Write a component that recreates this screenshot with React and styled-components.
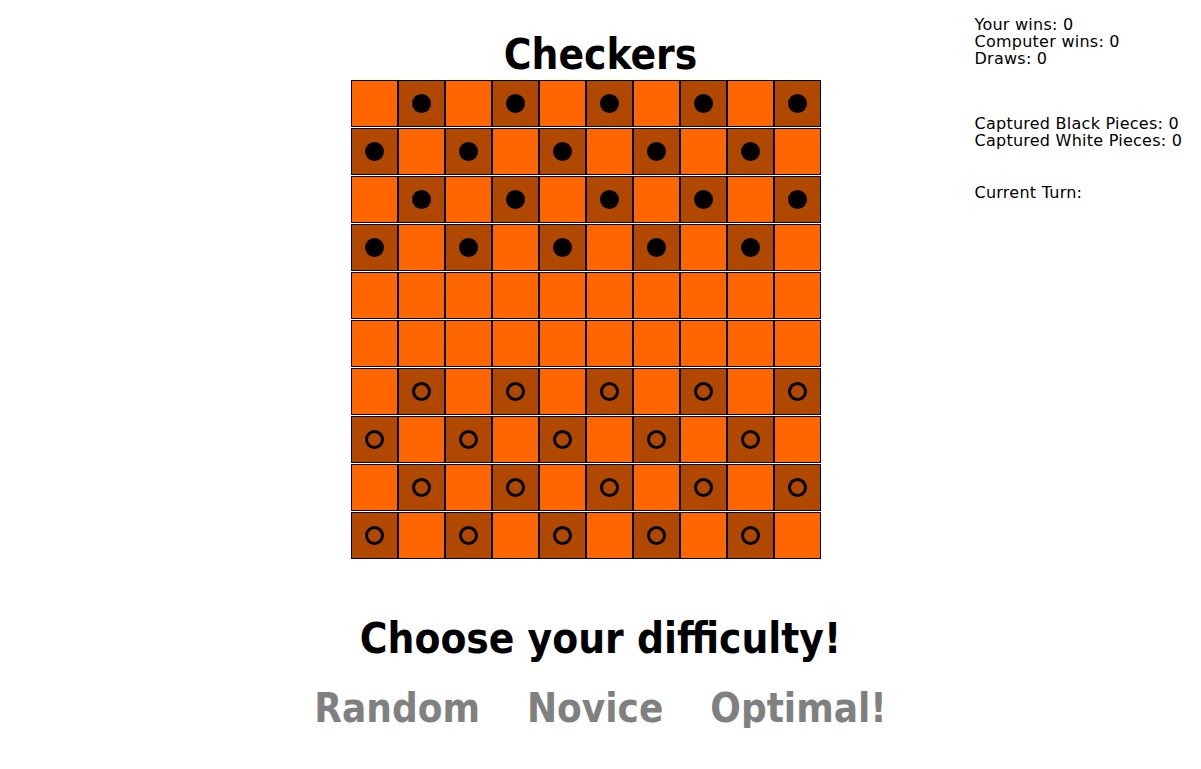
import React, { useState } from 'react';
import styled, { createGlobalStyle } from 'styled-components';

const GlobalStyle = createGlobalStyle`
    body {
        margin: 0;
        background: #ffffff;
        font-family: "DejaVu Sans Condensed", "DejaVu Sans", sans-serif;
        color: #000;
    }
`;

const Page = styled.div`
    display: grid;
    grid-template-columns: 1fr 500px 1fr;
    width: 100%;
`;

const Main = styled.main`
    grid-column: 2;
    grid-row: 1;
    display: flex;
    flex-direction: column;
`;

const Title = styled.h1`
    margin: 34px 0 4px;
    font-size: 42px;
    line-height: 42px;
    font-weight: bold;
    text-align: center;
`;

const Board = styled.div`
    display: flex;
    flex-direction: column;
    gap: 1px;
`;

const Row = styled.div`
    display: flex;
`;

const Cell = styled.div`
    width: 45px;
    height: 45px;
    border: 1px solid #000;
    background: ${(p) => (p.dark ? '#b04800' : '#ff6600')};
    display: flex;
    align-items: center;
    justify-content: center;
`;

const Piece = styled.div`
    width: 19px;
    height: 19px;
    border-radius: 50%;
    box-sizing: border-box;
    background: ${(p) => (p.hollow ? 'transparent' : '#000')};
    border: ${(p) => (p.hollow ? '3px solid #000' : 'none')};
`;

const Sidebar = styled.aside`
    grid-column: 3;
    grid-row: 1;
    padding: 16px 0 0 124px;
    font-family: "DejaVu Sans", sans-serif;
    font-size: 16px;
    line-height: 17px;
    letter-spacing: 0.25px;
`;

const StatBlock = styled.div`
    margin-bottom: ${(p) => p.space}px;
`;

const Difficulty = styled.section`
    grid-column: 1 / -1;
    grid-row: 2;
    display: flex;
    flex-direction: column;
    align-items: center;
    margin-top: 59px;
`;

const Prompt = styled.h2`
    margin: 0;
    font-size: 42px;
    line-height: 42px;
    font-weight: bold;
`;

const Choices = styled.div`
    display: flex;
    gap: 47px;
    margin-top: 28px;
`;

const Choice = styled.button`
    border: none;
    background: none;
    padding: 0;
    font-family: "DejaVu Sans Condensed", "DejaVu Sans", sans-serif;
    font-size: 40px;
    line-height: 40px;
    font-weight: bold;
    color: #808080;
    cursor: pointer;
`;

function startBoard () {
    const rows = [];
    for (let r = 0; r < 10; r++) {
        const row = [];
        for (let c = 0; c < 10; c++) {
            let piece = null;
            if ((r + c) % 2 === 1) {
                if (r < 4) piece = 'black';
                if (r > 5) piece = 'white';
            }
            row.push({ piece });
        }
        rows.push(row);
    }
    return rows;
}

export default function App () {
    const [board] = useState(startBoard);

    return (
        <>
            <GlobalStyle />
            <Page>
                <Main>
                    <Title>Checkers</Title>
                    <Board>
                        {board.map((row, r) => (
                            <Row key={r}>
                                {row.map((cell, c) => (
                                    <Cell key={c} dark={!!cell.piece}>
                                        {cell.piece && <Piece hollow={cell.piece === 'white'} />}
                                    </Cell>
                                ))}
                            </Row>
                        ))}
                    </Board>
                </Main>

                <Sidebar>
                    <StatBlock space={48}>
                        <div>Your wins: 0</div>
                        <div>Computer wins: 0</div>
                        <div>Draws: 0</div>
                    </StatBlock>
                    <StatBlock space={35}>
                        <div>Captured Black Pieces: 0</div>
                        <div>Captured White Pieces: 0</div>
                    </StatBlock>
                    <StatBlock space={0}>
                        <div>Current Turn:</div>
                    </StatBlock>
                </Sidebar>

                <Difficulty>
                    <Prompt>Choose your difficulty!</Prompt>
                    <Choices>
                        <Choice>Random</Choice>
                        <Choice>Novice</Choice>
                        <Choice>Optimal!</Choice>
                    </Choices>
                </Difficulty>
            </Page>
        </>
    );
}
